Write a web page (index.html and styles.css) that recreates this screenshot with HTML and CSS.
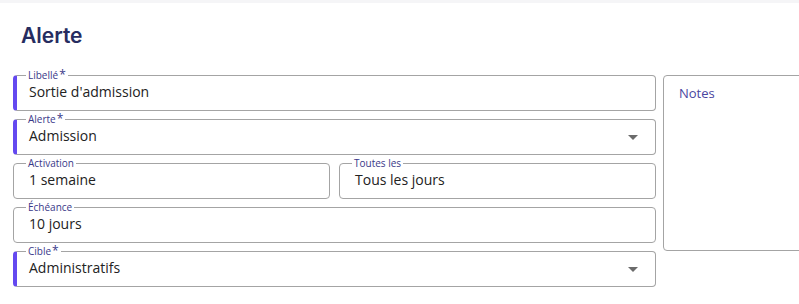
FILE: index.html
```html
<!DOCTYPE html>
<html lang="fr">
<head>
    <meta charset="UTF-8">
    <meta name="viewport" content="width=device-width, initial-scale=1.0">
    <title>Alerte</title>
    <link rel="stylesheet" href="styles.css">
</head>
<body>
    <div class="topbar"></div>
    <main class="page">
        <h1 class="title">Alerte</h1>
        <div class="layout">
            <form class="fields">
                <fieldset class="field required">
                    <legend>Libellé<span class="star">*</span></legend>
                    <div class="value">Sortie d'admission</div>
                </fieldset>

                <fieldset class="field required select">
                    <legend>Alerte<span class="star">*</span></legend>
                    <div class="value">Admission</div>
                    <span class="arrow"></span>
                </fieldset>

                <div class="row">
                    <fieldset class="field">
                        <legend>Activation</legend>
                        <div class="value">1 semaine</div>
                    </fieldset>
                    <fieldset class="field">
                        <legend>Toutes les</legend>
                        <div class="value">Tous les jours</div>
                    </fieldset>
                </div>

                <fieldset class="field">
                    <legend>Échéance</legend>
                    <div class="value">10 jours</div>
                </fieldset>

                <fieldset class="field required select">
                    <legend>Cible<span class="star">*</span></legend>
                    <div class="value">Administratifs</div>
                    <span class="arrow"></span>
                </fieldset>
            </form>
            <div class="notes">Notes</div>
        </div>
    </main>
</body>
</html>
```

FILE: styles.css
```css
html, body {
    margin: 0;
    padding: 0;
    background-color: #fff;
    overflow: hidden;
}
body {
    font-family: "Open Sans", "Noto Sans", sans-serif;
    color: #222;
    width: 799px;
    height: 304px;
}
.topbar {
    height: 3px;
    background-color: #f5f5f7;
}
.page {
    padding: 0 0 0 13px;
}
.title {
    margin: 0;
    padding: 19px 0 0 8px;
    height: 28px;
    line-height: 28px;
    font-family: Inter, "Lato", sans-serif;
    font-size: 21px;
    font-weight: 600;
    color: #262c60;
}
.layout {
    display: flex;
    gap: 7px;
    margin-top: 19px;
    overflow: hidden;
}
.fields {
    width: 643px;
    display: flex;
    flex-direction: column;
    gap: 2px;
    flex-shrink: 0;
}
.row {
    display: grid;
    grid-template-columns: 1fr 1fr;
    gap: 9px;
}
.field {
    position: relative;
    margin: 0;
    min-width: 0;
    padding: 1px 12px 9px 12px;
    border: 1px solid #a4a4a4;
    border-radius: 4px;
}
.field legend {
    padding: 0 2px;
    font-size: 10px;
    line-height: 12px;
    color: #3a3889;
}
.field .star {
    font-size: 12px;
    line-height: 12px;
    vertical-align: top;
    margin-left: 1px;
}
.field.required {
    border-left: 4px solid #6449f0;
    padding-left: 9px;
}
.value {
    font-size: 14px;
    line-height: 19px;
    padding-left: 3px;
}
.arrow {
    position: absolute;
    right: 17px;
    top: 10px;
    width: 0;
    height: 0;
    border-left: 5px solid transparent;
    border-right: 5px solid transparent;
    border-top: 5px solid #6b6b6b;
}
.notes {
    width: 250px;
    height: 156px;
    margin-top: 6px;
    padding: 8px 15px 10px;
    border: 1px solid #a4a4a4;
    border-radius: 4px;
    font-size: 13px;
    color: #4a46a0;
    flex-shrink: 0;
}
```
